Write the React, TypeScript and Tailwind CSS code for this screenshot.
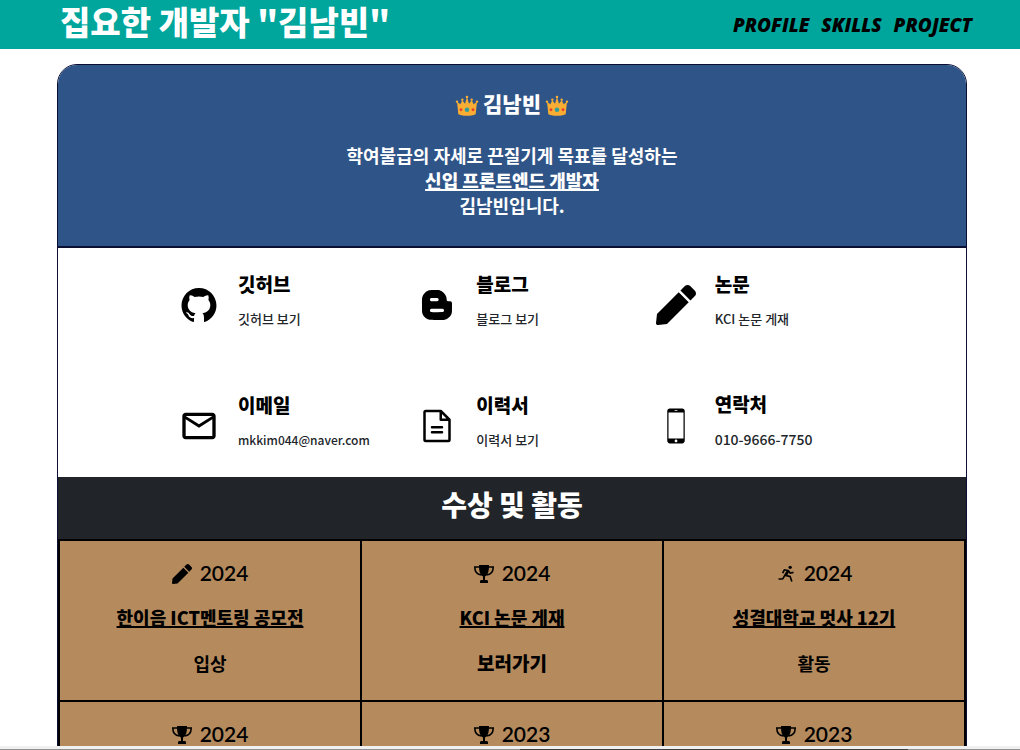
import type { ReactNode } from "react";
import { AiFillGithub } from "react-icons/ai";
import { BiLogoBlogger, BiRun } from "react-icons/bi";
import { FaPen } from "react-icons/fa";
import { IoIosPhonePortrait } from "react-icons/io";
import { MdOutlineMail } from "react-icons/md";
import { PiFileText } from "react-icons/pi";

type Icon = (props: { className?: string }) => ReactNode;

function Crown() {
  return (
    <svg viewBox="0 0 36 36" className="mt-1 size-6" aria-hidden="true">
      <g fill="#F9AE33">
        <path d="M3 13l5 4 3-6 4 5 3-10 3 10 4-5 3 6 5-4-2 19c-8 3-18 3-26 0z" />
        <circle cx="3" cy="13" r="1.8" />
        <circle cx="11" cy="10" r="1.8" />
        <circle cx="18" cy="6" r="2" />
        <circle cx="25" cy="10" r="1.8" />
        <circle cx="33" cy="13" r="1.8" />
      </g>
      <circle cx="18" cy="25" r="3.4" fill="#2F9E9A" />
      <circle cx="9" cy="25" r="2.2" fill="#E8402F" />
      <circle cx="27" cy="25" r="2.2" fill="#E8402F" />
    </svg>
  );
}

function Trophy({ className }: { className?: string }) {
  return (
    <svg viewBox="0 0 20 20" className={className} aria-hidden="true">
      <path
        fill="currentColor"
        d="M5 1h10c0 6-.6 9.500-4 11.500V16h1.500c1 0 1.500.7 1.500 1.500V19H6v-1.500C6 16.700 6.500 16 7.500 16H9v-3.500C5.600 10.500 5 7 5 1z"
      />
      <path
        fill="none"
        stroke="currentColor"
        strokeWidth="1.6"
        d="M5.500 3H.8c0 4.500 2 7.500 6.700 8M14.500 3h4.700c0 4.500-2 7.500-6.700 8"
      />
    </svg>
  );
}

type Contact = { title: string; text: ReactNode; icon: Icon };

const contacts: Contact[] = [
  { title: "깃허브", text: <a href="#github">깃허브 보기</a>, icon: AiFillGithub },
  { title: "블로그", text: <a href="#blog">블로그 보기</a>, icon: BiLogoBlogger },
  { title: "논문", text: <a href="#paper">KCI 논문 게재</a>, icon: FaPen },
  { title: "이메일", text: <span className="text-[12px]">mkkim044@naver.com</span>, icon: MdOutlineMail },
  { title: "이력서", text: <a href="#resume">이력서 보기</a>, icon: PiFileText },
  { title: "연락처", text: <span className="text-[14px]">010-9666-7750</span>, icon: IoIosPhonePortrait },
];

type Award = { year: string; icon: Icon; title?: string; note?: ReactNode };

const awards: Award[][] = [
  [
    { year: "2024", icon: FaPen, title: "한이음 ICT멘토링 공모전", note: "입상" },
    {
      year: "2024",
      icon: Trophy,
      title: "KCI 논문 게재",
      note: <a href="#paper" className="text-[19px] font-black">보러가기</a>,
    },
    { year: "2024", icon: BiRun, title: "성결대학교 멋사 12기", note: "활동" },
  ],
  [
    { year: "2024", icon: Trophy },
    { year: "2023", icon: Trophy },
    { year: "2023", icon: Trophy },
  ],
];

const links = ["PROFILE", "SKILLS", "PROJECT"];

export default function App() {
  return (
    <div className="flex h-screen flex-col overflow-hidden bg-white font-['Noto_Sans_CJK_KR',sans-serif] text-black">
      <header className="flex h-[49px] shrink-0 items-center justify-between bg-[#00a69c] pr-12 pl-15">
        <h1 className="pb-2 text-[33px] leading-10 font-black text-white">집요한 개발자 "김남빈"</h1>
        <nav className="flex gap-3 pt-0.5 font-['Open_Sans',sans-serif] text-[19px] font-extrabold italic">
          {links.map((link) => (
            <a key={link} href={`#${link.toLowerCase()}`}>{link}</a>
          ))}
        </nav>
      </header>

      <main className="min-h-0 flex-1 overflow-hidden pt-[15px] pr-[53px] pl-[57px]">
        <div className="overflow-hidden rounded-t-[20px] border border-[#0b1033]">
          <section className="border-b-2 border-[#0b1033] bg-[#2f5487] pt-[22px] pb-7 text-center text-white">
            <h2 className="mb-6 flex items-center justify-center gap-1 text-[21px] leading-8 font-black">
              <Crown />
              김남빈
              <Crown />
            </h2>
            <p className="text-[18px] leading-[25px] font-bold">
              학여불급의 자세로 끈질기게 목표를 달성하는
              <br />
              <strong className="font-black underline decoration-2">신입 프론트엔드 개발자</strong>
              <br />
              김남빈입니다.
            </p>
          </section>

          <section className="grid grid-cols-3 gap-y-[60px] pt-[22px] pr-[72px] pb-[26px] pl-[121px]">
            {contacts.map(({ title, text, icon: ContactIcon }) => (
              <div key={title} className="flex items-center gap-[19px]">
                <ContactIcon className="mt-2.5 size-10 shrink-0" />
                <div>
                  <h3 className="mb-2.5 text-[19px] leading-7 font-black">{title}</h3>
                  <p className="text-[13px] leading-[22px] font-medium text-[#212529]">{text}</p>
                </div>
              </div>
            ))}
          </section>

          <h2 className="bg-[#212529] pt-1.5 pb-3.5 text-center text-[28px] leading-[42px] font-black text-white">
            수상 및 활동
          </h2>
          <table className="w-full table-fixed border-collapse border-2 border-black bg-[#b58b5d] text-center text-[18px]">
            <tbody>
              {awards.map((row, index) => (
                <tr key={index}>
                  {row.map(({ year, icon: AwardIcon, title, note }, column) => (
                    <td key={column} className="h-[161px] border-2 border-black align-top">
                      <p className="mt-[18px] flex h-7 items-center justify-center gap-2 font-['Lato',sans-serif] text-[21px] font-semibold">
                        <AwardIcon className="mt-0.5 size-5" />
                        {year}
                      </p>
                      {title && <p className="mt-4 leading-7 font-black underline decoration-2">{title}</p>}
                      {note && <p className="mt-[18px] leading-7 font-bold">{note}</p>}
                    </td>
                  ))}
                </tr>
              ))}
            </tbody>
          </table>
        </div>
      </main>

      <footer className="flex h-1 shrink-0 flex-col justify-end bg-[#f0f0f0]">
        <div className="flex h-px">
          <div className="w-[51%] bg-[#909090]" />
          <div className="w-[38%] bg-[#404040]" />
          <div className="flex-1 bg-[#909090]" />
        </div>
      </footer>
    </div>
  );
}
